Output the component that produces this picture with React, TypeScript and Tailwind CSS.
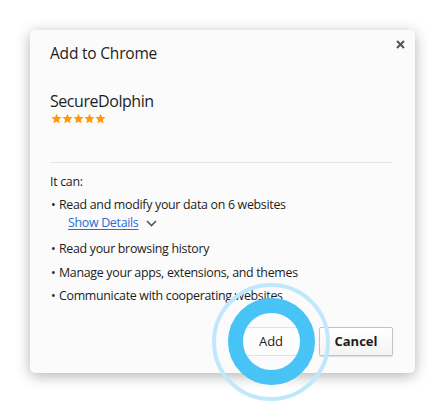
const perms = [
  "Read and modify your data on 6 websites",
  "Read your browsing history",
  "Manage your apps, extensions, and themes",
  "Communicate with cooperating websites",
];

function Bullet({ text }: { text: string }) {
  return (
    <div className="flex h-[18px] items-center leading-[18px]">
      <span className="w-[9px] pl-[1px]">•</span>
      <span>{text}</span>
    </div>
  );
}

function Star() {
  return (
    <svg width="11" height="11" viewBox="0 0 24 24">
      <path
        d="M12 1.5l3.2 7.1 7.8.8-5.9 5.2 1.7 7.7L12 18.3l-6.8 4 1.7-7.7L1 9.4l7.8-.8z"
        fill="#ff9a0a"
      />
    </svg>
  );
}

export default function App() {
  return (
    <div className="relative h-[407px] w-[445px] overflow-hidden bg-white pl-[30px] pt-[30px] font-['Open_Sans',sans-serif] text-[#1d1d1d]">
      <div className="flex h-[343px] w-[385px] flex-col rounded-[5px] bg-[#fbfbfb] pl-5 pr-[22px] pt-[13px] pb-[17px] shadow-[0_3px_14px_rgba(0,0,0,0.3)]">
        <div className="flex h-5 items-center justify-between">
          <span className="text-[15.5px] leading-5 tracking-[-0.2px]">Add to Chrome</span>
          <svg width="9" height="9" viewBox="0 0 9 9" className="mr-[-12px] -mt-[17px]">
            <path d="M1 1L8 8M8 1L1 8" stroke="#555" strokeWidth="2" />
          </svg>
        </div>

        <div className="mt-[28px] text-[16px] leading-5 tracking-[-0.45px]">SecureDolphin</div>
        <div className="mt-[2px] flex h-[11px] pl-[1px]">
          <Star />
          <Star />
          <Star />
          <Star />
          <Star />
        </div>

        <div className="mt-[38px] border-t border-[#e6e6e6]" />

        <div className="mt-[10px] text-[12.4px] tracking-[-0.3px]">
          <div className="h-[18px] leading-[18px]">It can:</div>
          <div className="mt-[5px]">
            <Bullet text={perms[0]} />
            <div className="flex h-[18px] items-center pl-[18px]">
              <span className="text-[#2a6bd4] underline decoration-[#2a6bd4] underline-offset-2">Show Details</span>
              <svg width="11" height="7" viewBox="0 0 11 7" className="ml-[8px] mt-[1px]">
                <path d="M1 1l4.5 4.5L10 1" fill="none" stroke="#555" strokeWidth="1.6" />
              </svg>
            </div>
          </div>
          <div className="mt-2">
            <Bullet text={perms[1]} />
          </div>
          <div className="mt-[6px]">
            <Bullet text={perms[2]} />
          </div>
          <div className="mt-[5px]">
            <Bullet text={perms[3]} />
          </div>
        </div>

        <div className="mt-auto flex justify-end gap-3">
          <button className="h-[29px] w-[72px] rounded-[2px] border border-[#e3e3e3] bg-[#fdfdfd] text-[13px] text-[#1d1d1d]">
            Add
          </button>
          <button className="h-[29px] w-[74px] rounded-[2px] border border-[#c3c3c3] bg-gradient-to-b from-white to-[#f4f4f4] text-[13px] font-bold text-[#1d1d1d] shadow-[0_1px_1px_rgba(0,0,0,0.12)]">
            Cancel
          </button>
        </div>
      </div>

      {/* click highlight over the Add button */}
      <div className="pointer-events-none absolute left-[212px] top-[283px] h-[118px] w-[118px] rounded-full border-4 border-[#bfe8fb]" />
      <div className="pointer-events-none absolute left-[228px] top-[298px] h-[87px] w-[87px] rounded-full border-[15px] border-[#47c3f6]" />
    </div>
  );
}
